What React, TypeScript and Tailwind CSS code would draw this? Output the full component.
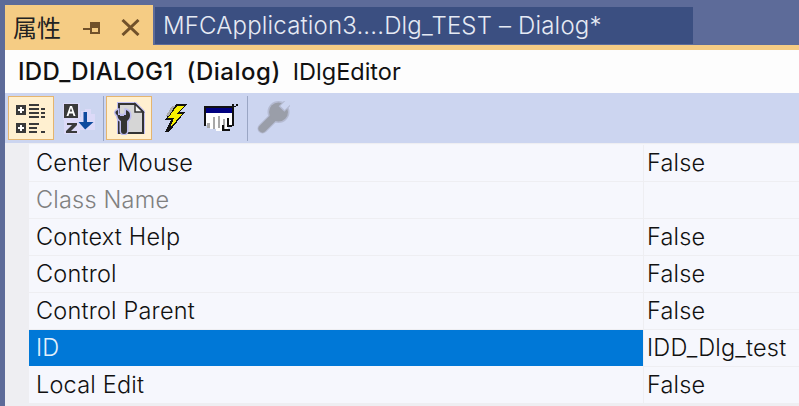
import React from "react";

const rows = [
  { name: "Center Mouse", value: "False" },
  { name: "Class Name", value: "", muted: true },
  { name: "Context Help", value: "False" },
  { name: "Control", value: "False" },
  { name: "Control Parent", value: "False" },
  { name: "ID", value: "IDD_Dlg_test", selected: true },
  { name: "Local Edit", value: "False" },
];

const CategorizedIcon = () => (
  <svg width="30" height="30" viewBox="0 0 30 30" shapeRendering="crispEdges">
    <path fill="#3a3a3a" d="M0 2h10v10H0zM0 20h10v10H0z" />
    <path fill="#fff" d="M4 4h2v2h2v2H6v2H4V8H2V6h2z" />
    <path fill="#fff" d="M4 22h2v2h2v2H6v2H4v-2H2v-2h2z" />
    <path fill="#3a3a3a" d="M13 1h10v2H13zM13 5h10v2H13zM13 9h10v2H13zM13 13h10v2H13zM13 20h10v2H13zM13 24h8v2h-8zM13 28h8v2h-8zM25 28h4v2h-4zM25 5h4v2h-4zM25 9h4v2h-4zM25 13h4v2h-4z" />
  </svg>
);

const SortIcon = () => (
  <svg width="32" height="32" viewBox="0 0 32 32">
    <path fill="#dcdaf8" d="M0 1h17v14h1V9h4V7h6v5h4v16H17v4H1V18H0z" />
    <rect x="1" y="2" width="14" height="14" fill="#3a3a3a" />
    <path fill="#fff" d="M7 4h2l3.500 10h-2l-.7-2.500H6.200L5.500 14h-2zM6.800 9.500h2.400L8 6z" />
    <path fill="#3a3a3a" d="M4 21h10v2l-6 6h6v2H3v-2l6-6H4z" />
    <path fill="#0e4a9e" d="M20 10h3.500v10H30l-8.300 7.500L15 20h5z" transform="translate(.5 0)" />
  </svg>
);

const PagesIcon = () => (
  <svg width="32" height="33" viewBox="0 0 32 33">
    <path fill="#bdbcf0" d="M4 0h19l9 9v23H4z" />
    <path fill="#d6d6d6" stroke="#333" strokeWidth="2" d="M6 2h16l8 8v21H6z" />
    <path fill="#f4f4f4" stroke="#333" strokeWidth="1.500" d="M22 2v8h8z" />
    <path
      fill="#333"
      stroke="#bdbcf0"
      strokeWidth="3"
      paintOrder="stroke"
      d="M5 8v5h2v1h4v-1h2V8c3 1 4 3 4 5.500 0 2.500-1.500 4.500-3 5.500v10a2.500 2.500 0 0 1-6 0V19c-2-1-3.500-3-3.500-5.500C1.500 11 2 9 5 8z"
    />
  </svg>
);

const BoltIcon = () => (
  <svg width="24" height="30" viewBox="0 0 24 30" shapeRendering="crispEdges">
    <path fill="#111" d="M12 1h11l-7 8h5L5 29H1l6-12H1z" />
    <path fill="#f8f000" d="M13 3h7l-7 8h5L6 25l4-10H4z" />
    <path fill="#aaa" d="M8 3h3L5 13H2z" />
  </svg>
);

const EventsIcon = () => (
  <svg width="34" height="30" viewBox="0 0 34 30" shapeRendering="crispEdges">
    <path fill="#fff" d="M2 8h26v14h-4v6H12v-2H6v-4H2z" />
    <path fill="#111" d="M0 3h28V1h2v2h4V1h-2v3h-2v19h-2V9H2v14H0z" />
    <path fill="#000080" d="M2 5h26v5H2z" />
    <path fill="#a8a8a8" d="M3 20h3v5H3zM9 14h2v12H9zM14 13h2v12h-2zM19 16h2v10h-2z" />
    <path fill="#111" d="M18 22h2v6h-2zM23 15h2v9h-2zM20 26h6v2h-6zM25 22h3v2h-3z" />
  </svg>
);

const WrenchIcon = () => (
  <svg width="34" height="34" viewBox="0 0 34 34">
    <path stroke="#b5bbd2" strokeWidth="10" strokeLinecap="round" d="M6.500 27.500L21 13" />
    <circle cx="22.500" cy="11" r="11" fill="#b5bbd2" />
    <path stroke="#9a9ea9" strokeWidth="8" strokeLinecap="round" d="M6.500 27.500L21 13" />
    <circle cx="22.500" cy="11" r="9.500" fill="#9a9ea9" />
    <path stroke="#b5bbd2" strokeWidth="8" d="M25.500 8L36 -2.500" />
    <path stroke="#ccd5f0" strokeWidth="6" d="M26.500 7L36 -2.500" />
  </svg>
);

const PinIcon = () => (
  <svg width="17" height="13" viewBox="0 0 17 13" shapeRendering="crispEdges">
    <path fill="#71512a" d="M0 6h7V0h10v12H7V8H0zM9 2v8h6V2z" />
    <path fill="#71512a" d="M9 2h6v4H9z" />
  </svg>
);

const CloseIcon = () => (
  <svg width="19" height="17" viewBox="0 0 19 17">
    <path stroke="#71512a" strokeWidth="3" d="M1.500 1l16 15M17.500 1l-16 15" />
  </svg>
);

const ToolButton = ({ active, className, children }: { active?: boolean; className: string; children: React.ReactNode }) => (
  <div
    className={`flex h-[44px] items-center justify-center border ${
      active ? "border-[#e5b56f] bg-[#fff0d0]" : "border-transparent"
    } ${className}`}
  >
    {children}
  </div>
);

export default function App() {
  return (
    <div
      className="flex h-[406px] w-[799px] flex-col overflow-hidden bg-[#5d6b99] pl-[5px] text-[#111]"
      style={{ fontFamily: '"Inter", "Noto Sans CJK SC", sans-serif' }}
    >
      {/* tab strip */}
      <div className="flex h-[45px] shrink-0 items-end">
        <div className="flex h-[40px] w-[148px] shrink-0 items-center bg-[#f5cc84] pl-[8px] pt-[3px]">
          <span className="text-[24px] leading-none text-[#222]" style={{ fontFamily: '"Noto Sans CJK SC", sans-serif' }}>
            属性
          </span>
          <span className="ml-[22px] mt-[4px] flex">
            <PinIcon />
          </span>
          <span className="ml-[21px] mt-[2px] flex">
            <CloseIcon />
          </span>
        </div>
        <div className="mb-px ml-[2px] flex h-[37px] w-[538px] items-center bg-[#3b4f81] pl-[8px] text-[24px] font-light tracking-[0.16px] text-[#e6eaf4]">
          MFCApplication3....Dlg_TEST – Dialog*
        </div>
      </div>
      <div className="h-[5px] shrink-0 bg-[#f5cc84]" />

      {/* object title */}
      <div className="flex h-[43px] shrink-0 items-center bg-[#fdfdfd] pl-[13px] text-[23.5px]">
        <span className="text-[24px] font-medium tracking-[0.3px]">IDD_DIALOG1</span>
        <span className="ml-[13px] text-[24px] font-medium tracking-[0.5px]">(Dialog)</span>
        <span className="ml-[12px]">IDlgEditor</span>
      </div>

      {/* toolbar */}
      <div className="flex h-[50px] shrink-0 items-center bg-[#ccd5f0] pl-[3px]">
        <ToolButton active className="w-[46px]">
          <CategorizedIcon />
        </ToolButton>
        <ToolButton className="ml-[8px] w-[34px]">
          <SortIcon />
        </ToolButton>
        <div className="ml-[7px] h-[45px] w-px bg-[#9aa6c4]" />
        <ToolButton active className="ml-[2px] w-[46px]">
          <PagesIcon />
        </ToolButton>
        <ToolButton className="ml-[10px] w-[28px]">
          <BoltIcon />
        </ToolButton>
        <ToolButton className="ml-[13px] w-[36px]">
          <EventsIcon />
        </ToolButton>
        <div className="ml-[8px] h-[45px] w-px bg-[#9aa6c4]" />
        <ToolButton className="ml-[7px] w-[36px]">
          <WrenchIcon />
        </ToolButton>
      </div>

      {/* property grid */}
      <div className="flex-1 bg-[#eeeef2] pl-[24px] pt-px">
        <div className="h-px bg-[#f5f6fb]" />
        {rows.map((row) => (
          <div key={row.name} className="flex h-[37px] bg-[#f6f7fd] text-[23.5px] font-light leading-none tracking-[0.2px]">
            <div
              className={`flex w-[614px] items-center border-b pl-[7px] ${
                row.selected
                  ? "border-[#f6f7fd] bg-[#0078d7] text-[#e4f1fb]"
                  : "border-[#eeeef2]"
              } ${row.muted ? "text-[#808080]" : ""}`}
            >
              {row.name}
            </div>
            <div className="flex flex-1 items-center border-b border-l border-[#eeeef2] pl-[3px]">
              {row.value}
            </div>
          </div>
        ))}
      </div>
    </div>
  );
}
